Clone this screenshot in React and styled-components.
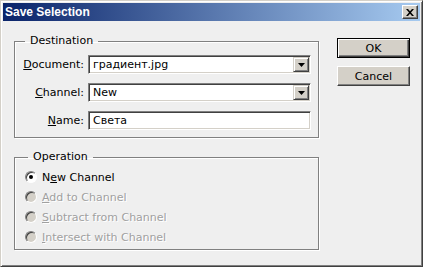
import React from "react";
import styled, { createGlobalStyle } from "styled-components";

const GlobalStyle = createGlobalStyle`
  html, body {
    margin: 0;
    padding: 0;
    background: #efefef;
  }
  body {
    font-family: "DejaVu Sans", Tahoma, sans-serif;
    font-size: 11px;
    color: #000;
  }
`;

const Window = styled.div`
  width: 423px;
  height: 267px;
  box-sizing: border-box;
  padding: 2px;
  background: #efefef;
  border: 1px solid;
  border-color: #d4d0c8 #404040 #404040 #d4d0c8;
  box-shadow: inset 1px 1px 0 #fff, inset -1px -1px 0 #808080;
  display: flex;
  flex-direction: column;
`;

const TitleBar = styled.div`
  height: 18px;
  display: flex;
  align-items: center;
  justify-content: space-between;
  padding: 0 2px 0 2px;
  background: linear-gradient(to right, #0a246a, #a6caf0);
`;

const Title = styled.span`
  color: #fff;
  font-family: "Liberation Sans", Arial, sans-serif;
  font-weight: bold;
  font-size: 12px;
`;

const CloseButton = styled.button`
  width: 16px;
  height: 14px;
  padding: 0;
  box-sizing: border-box;
  background: #d4d0c8;
  border: 1px solid;
  border-color: #fff #404040 #404040 #fff;
  box-shadow: inset -1px -1px 0 #808080;
  display: flex;
  align-items: center;
  justify-content: center;
`;

const Body = styled.div`
  flex: 1;
  display: flex;
  gap: 18px;
  padding: 13px 0 0 11px;
`;

const Column = styled.div`
  width: 305px;
  display: flex;
  flex-direction: column;
  gap: 12px;
`;

const Group = styled.fieldset`
  margin: 0;
  box-sizing: border-box;
  width: 305px;
  padding: ${(p) => p.$pad};
  border: 1px solid #808080;
  box-shadow: inset 1px 1px 0 #fff, 1px 1px 0 #fff;
`;

const Legend = styled.legend`
  margin-left: 3px;
  padding: 0 5px;
  line-height: 14px;
`;

const FieldGrid = styled.div`
  display: grid;
  grid-template-columns: 62px 223px;
  column-gap: 4px;
  row-gap: 9px;
  align-items: center;
`;

const Label = styled.label`
  text-align: right;
  white-space: nowrap;
`;

const Key = styled.span`
  text-decoration: underline;
`;

const Field = styled.div`
  height: 19px;
  box-sizing: border-box;
  background: #fff;
  border: 1px solid;
  border-color: #808080 #fff #fff #808080;
  box-shadow: inset 1px 1px 0 #404040, inset -1px -1px 0 #d4d0c8;
  display: flex;
  align-items: center;
  padding: 0 2px 0 4px;
`;

const FieldText = styled.span`
  flex: 1;
  white-space: nowrap;
`;

const DropButton = styled.span`
  width: 16px;
  height: 15px;
  box-sizing: border-box;
  margin-right: -1px;
  background: #d4d0c8;
  border: 1px solid;
  border-color: #d4d0c8 #404040 #404040 #d4d0c8;
  box-shadow: inset 1px 1px 0 #fff, inset -1px -1px 0 #808080;
  display: flex;
  align-items: center;
  justify-content: center;
`;

const RadioList = styled.div`
  display: flex;
  flex-direction: column;
`;

const RadioRow = styled.div`
  height: 20px;
  display: flex;
  align-items: center;
  gap: 5px;
  color: ${(p) => (p.$disabled ? "#a0a0a0" : "#000")};
  text-shadow: ${(p) => (p.$disabled ? "1px 1px 0 #fff" : "none")};
`;

const RadioDot = styled.span`
  width: 12px;
  height: 12px;
  box-sizing: border-box;
  border-radius: 50%;
  border: 1px solid;
  border-color: #808080 #fff #fff #808080;
  box-shadow: inset 1px 1px 0 #404040;
  background: ${(p) => (p.$disabled ? "#d4d0c8" : "#fff")};
  display: flex;
  align-items: center;
  justify-content: center;
  &::after {
    content: "";
    width: 4px;
    height: 4px;
    border-radius: 50%;
    background: #000;
    display: ${(p) => (p.$checked ? "block" : "none")};
  }
`;

const Buttons = styled.div`
  margin-top: 4px;
  display: flex;
  flex-direction: column;
  gap: 8px;
`;

const Button = styled.button`
  width: 73px;
  height: 20px;
  box-sizing: border-box;
  padding: 0;
  font-family: "DejaVu Sans", Tahoma, sans-serif;
  font-size: 11px;
  color: #000;
  background: #d4d0c8;
  border: 1px solid;
  border-color: ${(p) => (p.$default ? "#000" : "#fff #404040 #404040 #fff")};
  box-shadow: ${(p) =>
    p.$default
      ? "inset 1px 1px 0 #fff, inset -1px -1px 0 #404040, inset -2px -2px 0 #808080"
      : "inset -1px -1px 0 #808080"};
`;

const Arrow = () => (
  <svg width="7" height="4" viewBox="0 0 7 4">
    <path d="M0 0h7L3.5 4z" fill="#000" />
  </svg>
);

const Select = ({ value }) => (
  <Field>
    <FieldText>{value}</FieldText>
    <DropButton>
      <Arrow />
    </DropButton>
  </Field>
);

const options = [
  { pre: "N", key: "e", rest: "w Channel", checked: true },
  { pre: "", key: "A", rest: "dd to Channel", disabled: true },
  { pre: "", key: "S", rest: "ubtract from Channel", disabled: true },
  { pre: "", key: "I", rest: "ntersect with Channel", disabled: true },
];

export default function App() {
  return (
    <>
      <GlobalStyle />
      <Window>
        <TitleBar>
          <Title>Save Selection</Title>
          <CloseButton>
            <svg width="8" height="7" viewBox="0 0 8 7">
              <path d="M0 0h2l2 2.2L6 0h2L5 3.5 8 7H6L4 4.8 2 7H0l3-3.5z" fill="#000" />
            </svg>
          </CloseButton>
        </TitleBar>
        <Body>
          <Column>
            <Group $pad="7px 6px 7px 7px">
              <Legend>Destination</Legend>
              <FieldGrid>
                <Label>
                  <Key>D</Key>ocument:
                </Label>
                <Select value="градиент.jpg" />
                <Label>
                  <Key>C</Key>hannel:
                </Label>
                <Select value="New" />
                <Label>
                  <Key>N</Key>ame:
                </Label>
                <Field>
                  <FieldText>Света</FieldText>
                </Field>
              </FieldGrid>
            </Group>
            <Group $pad="3px 6px 2px 10px">
              <Legend>Operation</Legend>
              <RadioList>
                {options.map((o) => (
                  <RadioRow key={o.rest} $disabled={o.disabled}>
                    <RadioDot $checked={o.checked} $disabled={o.disabled} />
                    <span>
                      {o.pre}
                      <Key>{o.key}</Key>
                      {o.rest}
                    </span>
                  </RadioRow>
                ))}
              </RadioList>
            </Group>
          </Column>
          <Buttons>
            <Button $default>OK</Button>
            <Button>Cancel</Button>
          </Buttons>
        </Body>
      </Window>
    </>
  );
}
